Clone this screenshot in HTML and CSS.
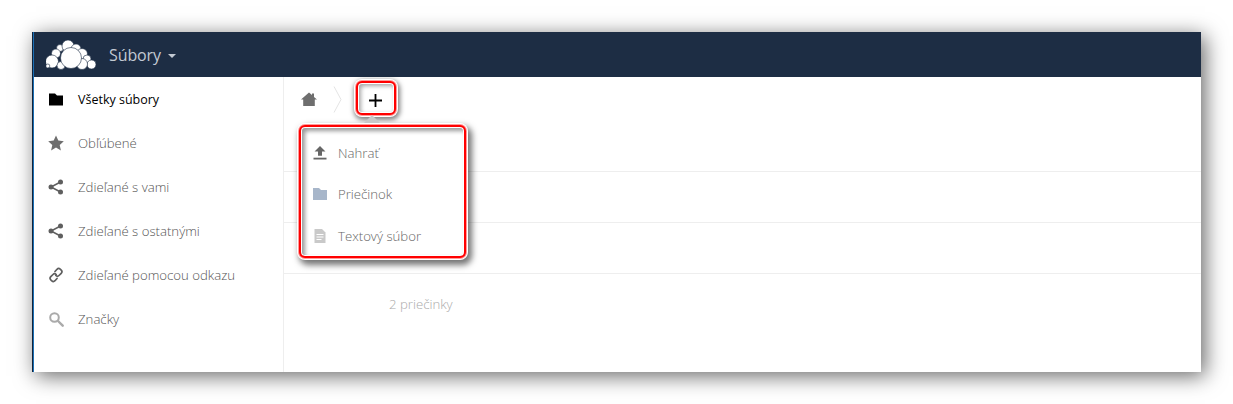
FILE: index.html
```html
<!DOCTYPE html>
<html lang="sk">
<head>
<meta charset="utf-8">
<title>Súbory</title>
<link rel="stylesheet" href="styles.css">
</head>
<body>
<div class="window">
  <header class="topbar">
    <svg class="logo" viewBox="0 0 50 30" width="50" height="30" aria-hidden="true">
      <g fill="#fff" stroke="#1d2d44" stroke-width="0.6">
        <circle cx="14" cy="8" r="3.500"/>
        <circle cx="10" cy="13.500" r="4.500"/>
        <circle cx="6" cy="21.500" r="6.500"/>
        <circle cx="1.800" cy="26" r="2"/>
        <circle cx="22" cy="6" r="6"/>
        <circle cx="30" cy="9" r="5"/>
        <circle cx="36" cy="14" r="5.500"/>
        <circle cx="41" cy="19" r="4"/>
        <circle cx="45.500" cy="24.500" r="4.500"/>
        <circle cx="15" cy="25.500" r="4"/>
        <circle cx="36" cy="24" r="5.500"/>
        <circle cx="25" cy="18" r="10.500"/>
      </g>
    </svg>
    <span class="app-name">Súbory</span>
    <span class="caret"></span>
  </header>
  <div class="content">
    <nav class="sidebar">
      <a class="nav-item active">
        <svg class="icon" viewBox="0 0 16 16"><path d="M1 2.500h6l2 2h6v10H1z" fill="#000"/></svg>
        <span>Všetky súbory</span>
      </a>
      <a class="nav-item">
        <svg class="icon" viewBox="0 0 16 16"><path d="M8 .5l2.300 5.100 5.500.6-4.100 3.700 1.200 5.500L8 12.600l-4.900 2.800 1.200-5.500L.2 6.200l5.500-.6z" fill="#555"/></svg>
        <span>Obľúbené</span>
      </a>
      <a class="nav-item">
        <svg class="icon" viewBox="0 0 16 16"><g fill="#444"><circle cx="12.500" cy="3" r="2.500"/><circle cx="3" cy="8" r="2.500"/><circle cx="12.500" cy="13" r="2.500"/></g><path d="M12.500 3L3 8l9.500 5" fill="none" stroke="#444" stroke-width="1.500"/></svg>
        <span>Zdieľané s vami</span>
      </a>
      <a class="nav-item">
        <svg class="icon" viewBox="0 0 16 16"><g fill="#444"><circle cx="12.500" cy="3" r="2.500"/><circle cx="3" cy="8" r="2.500"/><circle cx="12.500" cy="13" r="2.500"/></g><path d="M12.500 3L3 8l9.500 5" fill="none" stroke="#444" stroke-width="1.500"/></svg>
        <span>Zdieľané s ostatnými</span>
      </a>
      <a class="nav-item">
        <svg class="icon" viewBox="0 0 16 16"><g fill="none" stroke="#444" stroke-width="1.700" stroke-linecap="round"><path d="M7 4.500l2-2.200a2.300 2.300 0 0 1 3.200-.1l1 .9a2.300 2.300 0 0 1 0 3.200L11 8.500a2.300 2.300 0 0 1-3.200 0"/><path d="M9 11.500l-2 2.200a2.300 2.300 0 0 1-3.200.1l-1-.9a2.300 2.300 0 0 1 0-3.200L5 7.500a2.300 2.300 0 0 1 3.200 0"/></g></svg>
        <span>Zdieľané pomocou odkazu</span>
      </a>
      <a class="nav-item faint">
        <svg class="icon" viewBox="0 0 16 16"><circle cx="6.500" cy="6.500" r="4.300" fill="none" stroke="#666" stroke-width="2"/><path d="M10 10l4.700 4.700" stroke="#666" stroke-width="2.400" stroke-linecap="round"/></svg>
        <span>Značky</span>
      </a>
    </nav>
    <main class="files">
      <div class="controls">
        <svg class="home" viewBox="0 0 16 16" width="16" height="16"><path d="M8 1.500l3 2.600V2.500h2v3.400l3 2.600h-2.200V15H2.200V8.500H0z" fill="#6e6e6e"/></svg>
        <svg class="crumb" viewBox="0 0 9 27" width="9" height="27"><path d="M1 .5l7 13-7 13" fill="none" stroke="#e4e4e4"/></svg>
        <button class="add-btn" type="button">
          <svg viewBox="0 0 13 13" width="13" height="13"><path d="M6.500 0v13M0 6.500h13" stroke="#000" stroke-width="1.800"/></svg>
        </button>
      </div>
      <div class="row row-head"></div>
      <div class="row"></div>
      <div class="row"></div>
      <div class="summary">2 priečinky</div>
      <div class="popover">
        <span class="popover-arrow"></span>
        <div class="menu-item">
          <svg class="menu-icon" viewBox="0 0 14 14"><path d="M7 0l5.500 5.500H9v4.200H5V5.500H1.500z" fill="#666"/><rect x="0.500" y="11.700" width="13" height="1.800" fill="#666"/></svg>
          <span>Nahrať</span>
        </div>
        <div class="menu-item">
          <svg class="menu-icon" viewBox="0 0 14 14"><path d="M0 1h6l2 2h6v10H0z" fill="#a7b6ca"/></svg>
          <span>Priečinok</span>
        </div>
        <div class="menu-item">
          <svg class="menu-icon" viewBox="0 0 14 14"><path d="M1.500 0h7.500l3.500 3.500V14h-11z" fill="#c9c9c9"/><path d="M3.500 5.500h7M3.500 8h7M3.500 10.500h5" stroke="#fff"/></svg>
          <span>Textový súbor</span>
        </div>
      </div>
    </main>
  </div>
</div>
</body>
</html>
```
FILE: styles.css
```css
* { box-sizing: border-box; }
html, body { margin: 0; height: 100%; background: #fff; overflow: hidden; }
body { padding: 32px; font-family: "Open Sans", sans-serif; font-size: 13px; font-weight: 300; }

.window {
  width: 1169px;
  height: 340px;
  display: flex;
  flex-direction: column;
  background: #fff;
  border-left: 1px solid #12233a;
  box-shadow: 4px 4px 20px rgba(0, 0, 0, 0.6);
}

.topbar {
  height: 45px;
  flex: none;
  display: flex;
  align-items: center;
  background: #1d2d44;
  color: #c3cad3;
  border-left: 1px solid #1a6fb5;
  padding-left: 12px;
}
.logo { flex: none; margin-top: 1px; }
.app-name { margin-left: 13px; font-size: 16px; font-weight: 400; letter-spacing: -0.1px; }
.caret {
  margin-left: 7px;
  margin-top: 2px;
  border-left: 4px solid transparent;
  border-right: 4px solid transparent;
  border-top: 4px solid #c3cad3;
}

.content { flex: 1; display: flex; min-height: 0; border-left: 1px solid #1a6fb5; }

.sidebar {
  width: 250px;
  flex: none;
  border-right: 1px solid #eee;
}
.nav-item {
  height: 44px;
  display: flex;
  align-items: center;
  padding-left: 14px;
  color: #555;
  font-size: 13.200px;
}
.nav-item.active { color: #000; font-weight: 400; font-size: 12.500px; }
.icon { width: 16px; height: 16px; flex: none; margin-right: 14px; }
.nav-item:nth-child(n+2) .icon { opacity: 0.85; }
.nav-item.faint .icon { opacity: 0.55; }

.files { flex: 1; position: relative; }

.controls {
  height: 44px;
  display: flex;
  align-items: center;
  padding-left: 17px;
}
.home { flex: none; margin-top: -1px; }
.crumb { flex: none; margin-left: 16px; }
.add-btn {
  width: 40px;
  height: 34px;
  margin-left: 14px;
  margin-top: -2px;
  padding: 4px 2px 0 0;
  display: flex;
  align-items: center;
  justify-content: center;
  background: #fff;
  border: 2px solid #f00;
  border-radius: 6px;
  box-shadow: 0 0 0 1px #ff9a9a, 0 0 0 2px #fff, 1px 2px 5px 3px rgba(0, 0, 0, 0.5), inset 0 0 0 1px #fff, inset 2px 2px 4px 1px rgba(0, 0, 0, 0.35);
}

.row { height: 51px; border-bottom: 1px solid #eee; }

.summary {
  padding: 21px 0 0 105px;
  color: #aaa;
  font-size: 13.200px;
}

.popover {
  position: absolute;
  top: 48px;
  left: 15px;
  width: 167px;
  height: 133px;
  padding-top: 5px;
  background: #fff;
  border: 2px solid #f00;
  border-radius: 6px;
  box-shadow: 0 0 0 1px #ff9a9a, 0 0 0 2px #fff, 3px 4px 6px 3px rgba(0, 0, 0, 0.55), inset 0 0 0 1px #fff, inset 3px 3px 4px 1px rgba(0, 0, 0, 0.4);
}
.popover-arrow {
  position: absolute;
  top: -12px;
  left: 63px;
  border-left: 8px solid transparent;
  border-right: 8px solid transparent;
  border-bottom: 8px solid #c8c8c8;
}
.menu-item {
  height: 41.500px;
  display: flex;
  align-items: center;
  padding-left: 12px;
  color: #666;
  font-size: 13.200px;
}
.menu-icon { width: 14px; height: 14px; flex: none; margin-right: 11px; }
```
